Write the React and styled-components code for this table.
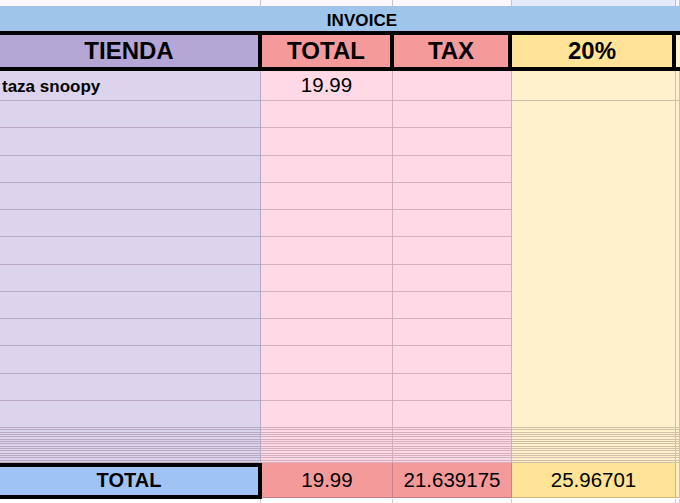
import React from 'react';
import styled, { createGlobalStyle } from 'styled-components';

const COLS = '261px 132px 119px 164px 1fr';
const LINE = 'rgba(70, 35, 60, 0.24)';

const colors = {
  band: '#9fc6ea',
  purpleHead: '#b4a7d6',
  salmon: '#f49a9b',
  yellowHead: '#ffe497',
  lavender: '#dcd3ec',
  pink: '#ffdae6',
  cream: '#fff1cb',
  blue: '#a0c3f5',
};

const GlobalStyle = createGlobalStyle`
  html, body { margin: 0; padding: 0; background: #fff; overflow: hidden; }
  body { font-family: "Liberation Sans", Arial, sans-serif; color: #000; }
  * { box-sizing: border-box; }
`;

const Sheet = styled.div`
  width: 680px;
  height: 503px;
  overflow: hidden;
  display: flex;
  flex-direction: column;
`;

const GridRow = styled.div`
  flex: none;
  display: grid;
  grid-template-columns: ${(p) => p.$cols || COLS};
  height: ${(p) => p.$h}px;
`;

const TopCell = styled.div`
  background: ${(p) => p.$bg};
  border-right: 1px solid ${LINE};
`;

const Band = styled.div`
  flex: none;
  height: 25px;
  background: ${colors.band};
  display: flex;
  align-items: center;
  overflow: hidden;
`;

const BandTitle = styled.span`
  flex: none;
  width: 724px;
  text-align: center;
  font-weight: 700;
  font-size: 17px;
  line-height: 1;
  padding-top: 4px;
  letter-spacing: 0.1px;
`;

const HeaderRow = styled.div`
  flex: none;
  display: flex;
  gap: 4px;
  height: 40px;
  padding: 4px 0;
  background: #000;
`;

const HeaderCell = styled.div`
  flex: ${(p) => (p.$w ? `0 0 ${p.$w}px` : '1 1 auto')};
  background: ${(p) => p.$bg};
  display: flex;
  align-items: center;
  justify-content: center;
  font-weight: 700;
  font-size: 24px;
  line-height: 1;
`;

const DataCell = styled.div`
  background: ${(p) => p.$bg};
  border-right: 1px solid ${LINE};
  border-bottom: ${(p) => (p.$line ? `1px solid ${LINE}` : 'none')};
  display: flex;
  align-items: center;
  justify-content: ${(p) => (p.$left ? 'flex-start' : 'center')};
  padding-left: ${(p) => (p.$left ? '2px' : '0')};
  padding-top: ${(p) => (p.$left ? '1px' : '0')};
  overflow: hidden;
  white-space: nowrap;
`;

const ItemName = styled.span`
  font-weight: 700;
  font-size: 17px;
  line-height: 1;
`;

const Num = styled.span`
  font-size: 20.5px;
  line-height: 1;
`;

const TotalLabel = styled.div`
  background: ${colors.blue};
  border: 4px solid #000;
  border-left: none;
  display: flex;
  align-items: center;
  justify-content: center;
  padding-bottom: 1px;
  font-weight: 700;
  font-size: 20px;
  line-height: 1;
`;

const TotalValue = styled.div`
  background: ${(p) => p.$bg};
  border-right: 1px solid ${LINE};
  border-bottom: 1px solid ${LINE};
  margin-bottom: 1px;
  display: flex;
  align-items: center;
  justify-content: center;
`;

const BottomCell = styled.div`
  background: #fff;
  border-right: 1px solid ${LINE};
`;

const dataCols = [colors.lavender, colors.pink, colors.pink, colors.cream, colors.cream];

const rows = [
  { h: 30, name: 'taza snoopy', total: '19.99', creamLine: true },
  ...Array.from({ length: 12 }, (_, i) => ({ h: 27.25, creamLine: i === 11 })),
];

const miniRows = Array.from({ length: 15 }, () => 35 / 15);

export default function App() {
  return (
    <>
      <GlobalStyle />
      <Sheet>
        <GridRow $h={6}>
          <TopCell $bg="#fcf7fa" />
          <TopCell $bg="#fcf7fa" />
          <TopCell $bg="#fcf7fa" />
          <TopCell $bg="#e6ebfb" />
          <TopCell $bg="#f3f5fd" />
        </GridRow>

        <Band>
          <BandTitle>INVOICE</BandTitle>
        </Band>

        <HeaderRow>
          <HeaderCell $w={258} $bg={colors.purpleHead}>TIENDA</HeaderCell>
          <HeaderCell $w={128} $bg={colors.salmon}>TOTAL</HeaderCell>
          <HeaderCell $w={114} $bg={colors.salmon}>TAX</HeaderCell>
          <HeaderCell $w={160} $bg={colors.yellowHead}>20%</HeaderCell>
          <HeaderCell $bg={colors.cream} />
        </HeaderRow>

        {rows.map((r, i) => (
          <GridRow key={i} $h={r.h}>
            {dataCols.map((bg, c) => (
              <DataCell key={c} $bg={bg} $left={c === 0} $line={c < 3 || r.creamLine}>
                {c === 0 && r.name && <ItemName>{r.name}</ItemName>}
                {c === 1 && r.total && <Num>{r.total}</Num>}
              </DataCell>
            ))}
          </GridRow>
        ))}

        {miniRows.map((h, i) => (
          <GridRow key={`m${i}`} $h={h}>
            {dataCols.map((bg, c) => (
              <DataCell key={c} $bg={bg} $line />
            ))}
          </GridRow>
        ))}

        <GridRow $h={36} $cols="262px 131px 119px 164px 1fr">
          <TotalLabel>TOTAL</TotalLabel>
          <TotalValue $bg={colors.salmon}><Num>19.99</Num></TotalValue>
          <TotalValue $bg={colors.salmon}><Num>21.639175</Num></TotalValue>
          <TotalValue $bg={colors.yellowHead}><Num>25.96701</Num></TotalValue>
          <TotalValue $bg={colors.cream} />
        </GridRow>

        <GridRow $h={4}>
          <BottomCell />
          <BottomCell />
          <BottomCell />
          <BottomCell />
          <BottomCell />
        </GridRow>
      </Sheet>
    </>
  );
}
